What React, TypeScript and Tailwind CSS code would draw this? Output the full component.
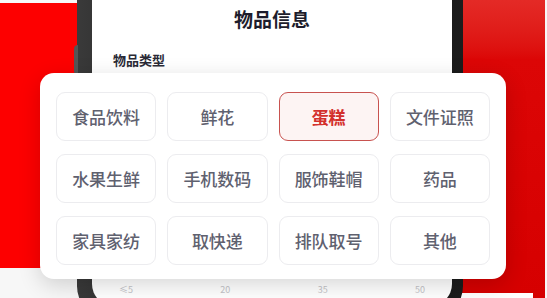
import React from "react";

const types = [
  "食品饮料", "鲜花", "蛋糕", "文件证照",
  "水果生鲜", "手机数码", "服饰鞋帽", "药品",
  "家具家纺", "取快递", "排队取号", "其他",
];

export default function App() {
  const selected = "蛋糕";

  return (
    <div
      className="relative w-[547px] h-[298px] overflow-hidden bg-[#f7f7f7]"
      style={{ fontFamily: '"Noto Sans CJK SC", "Noto Sans", sans-serif' }}
    >
      {/* red backdrop, left */}
      <div className="absolute left-0 top-[3px] w-[82px] h-[265px] bg-[#fd0000]" />
      {/* red backdrop, right */}
      <div className="absolute left-[458px] top-0 right-[2px] bottom-0 bg-gradient-to-b from-[#e42a26] via-[#dc0606] via-[20%] to-[#d60000]" />
      <div className="absolute left-[457px] bottom-0 w-[76px] h-[5px] bg-white" />

      {/* phone */}
      <div className="absolute left-[77px] top-[-70px] w-[386px] h-[390px] rounded-[34px] bg-gradient-to-r from-[#3a3a3a] via-[#0d0d0d] to-[#1c1c1c] pl-[15px] pr-[11px] py-[14px]">
        <div className="absolute left-[-3px] top-[115px] w-[4px] h-[30px] rounded-l bg-[#555]" />
        <div className="h-full rounded-[22px] bg-white flex flex-col pt-[65px]">
          <h1 className="text-center text-[19px] font-bold text-[#1d1d2c] leading-none">物品信息</h1>
          <div className="mt-[25px] pl-[21px] text-[13px] font-bold text-[#2a2a36] leading-none">物品类型</div>
          <div className="mt-auto mb-[10px] flex justify-between px-[27px] text-[9px] text-[#c4c4c8]">
            <span>≤5</span>
            <span>20</span>
            <span>35</span>
            <span>50</span>
          </div>
        </div>
      </div>

      {/* type picker card */}
      <div className="absolute left-[40px] top-[73px] w-[466px] h-[206px] rounded-[14px] bg-white shadow-[0_6px_22px_rgba(0,0,0,0.16)] px-[16px] pt-[19px]">
        <div className="grid grid-cols-4 gap-x-[11px] gap-y-[13px]">
          {types.map((t) => {
            const on = t === selected;
            return (
              <div
                key={t}
                className={
                  on
                    ? "h-[49px] rounded-[9px] border-[1.5px] border-[#c8524f] bg-[#fdf4f3] flex items-center justify-center text-[17px] font-bold text-[#d3302c]"
                    : "h-[49px] rounded-[9px] border border-[#ececef] bg-white flex items-center justify-center text-[17px] font-medium text-[#5f616f]"
                }
              >
                {t}
              </div>
            );
          })}
        </div>
      </div>
    </div>
  );
}
